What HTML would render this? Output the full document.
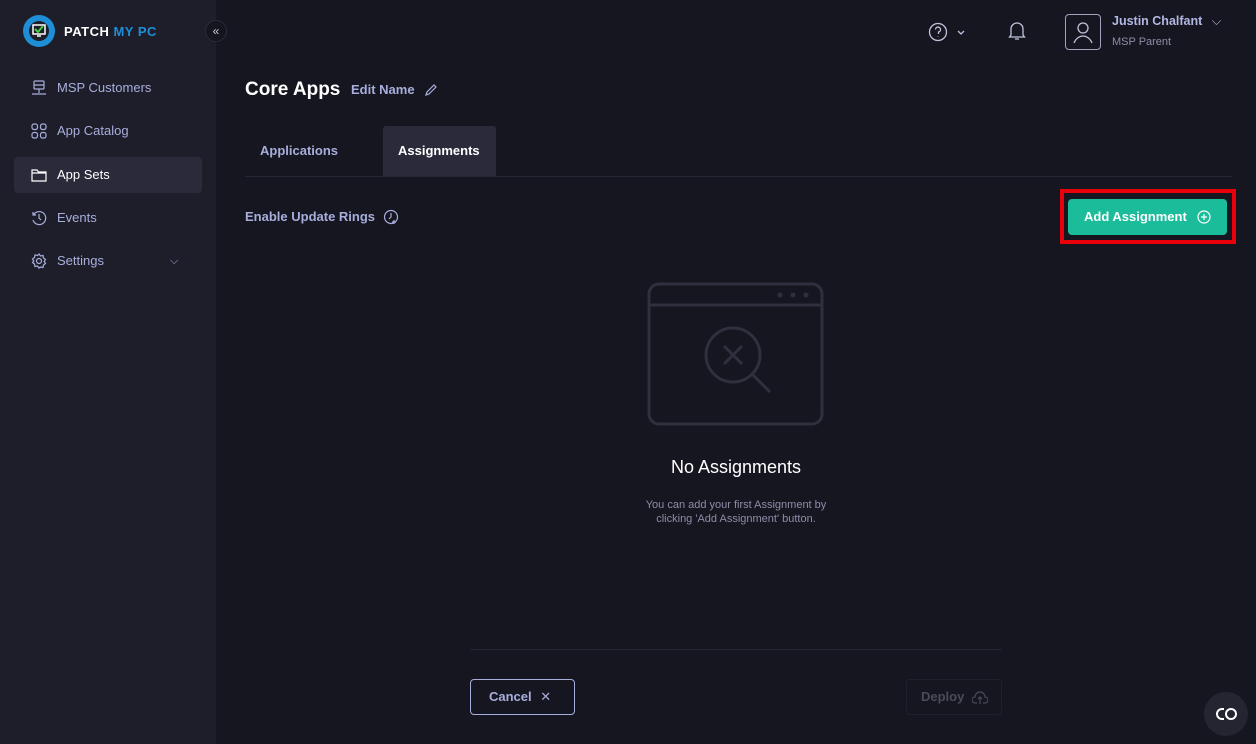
<!DOCTYPE html>
<html><head><meta charset="utf-8"><style>
*{margin:0;padding:0;box-sizing:border-box}
body{width:1256px;height:744px;background:#161620;font-family:"Liberation Sans",sans-serif;position:relative;overflow:hidden;color:#a8aedb}
.side{position:absolute;left:0;top:0;width:216px;height:744px;background:#1e1e2b}
.logo{position:absolute;left:22px;top:14px}
.brand{position:absolute;left:64px;top:24px;font-weight:bold;font-size:13px;color:#fff;letter-spacing:0.5px}
.brand span{color:#1e8fd6}
.coll{position:absolute;left:205px;top:20px;width:22px;height:22px;border-radius:50%;background:#151520;border:1px solid #2a2a38;color:#ccc;font-size:12px;text-align:center;line-height:20px}
.nav{position:absolute;left:14px;width:188px;height:36px;border-radius:4px;font-size:13px;line-height:36px;padding-left:43px;color:#a8aedb}
.nav svg{position:absolute;left:17px;top:10px}
.nav.act{background:#2a2a3a;color:#fff}
.t{position:absolute}
</style></head><body>
<div class="side">
<svg class="logo" width="34" height="34" viewBox="0 0 34 34"><circle cx="17" cy="17" r="16" fill="#1e8fd6"/><circle cx="17" cy="17" r="10" fill="#1e1e2b"/><path d="M11 11h12v9H11z" fill="none" stroke="#fff" stroke-width="1.5"/><path d="M13 15l3 3 5-6" stroke="#4c4" stroke-width="2" fill="none"/><path d="M15 22h4" stroke="#fff" stroke-width="1.5"/></svg>
<div class="brand">PATCH <span>MY PC</span></div>
<div class="coll">«</div>
<div class="nav" style="top:70px"><svg width="16" height="16" viewBox="0 0 16 16" fill="none" stroke="#a8aedb" stroke-width="1.2"><rect x="3" y="1" width="10" height="8" rx="1"/><path d="M8 9v4M1 14h14M3 5h10"/></svg>MSP Customers</div>
<div class="nav" style="top:113px"><svg width="16" height="16" viewBox="0 0 16 16" fill="none" stroke="#a8aedb" stroke-width="1.2"><rect x="1" y="1" width="5.5" height="5.5" rx="2"/><rect x="9.5" y="1" width="5.5" height="5.5" rx="2"/><rect x="1" y="9.5" width="5.5" height="5.5" rx="2"/><rect x="9.5" y="9.5" width="5.5" height="5.5" rx="2"/></svg>App Catalog</div>
<div class="nav act" style="top:157px"><svg width="16" height="16" viewBox="0 0 16 16" fill="none" stroke="#fff" stroke-width="1.2"><path d="M1 3h5l1.5 2H15v9H1z M1 6h14"/></svg>App Sets</div>
<div class="nav" style="top:200px"><svg width="16" height="16" viewBox="0 0 16 16" fill="none" stroke="#a8aedb" stroke-width="1.2"><path d="M2.5 5A6.5 6.5 0 1 1 2 10M2 2v3h3M8 4v4l2 2"/></svg>Events</div>
<div class="nav" style="top:243px"><svg width="16" height="16" viewBox="0 0 16 16" fill="none" stroke="#a8aedb" stroke-width="1.2"><circle cx="8" cy="8" r="2.5"/><path d="M8 1l1.5 2 2.5-.5.5 2.5 2 1.5-1.3 2 1.3 2-2 1.5-.5 2.5-2.5-.5L8 15l-1.5-2-2.5.5-.5-2.5-2-1.5L2.8 8 1.5 6 3.5 4.5 4 2l2.5.5z"/></svg>Settings<span style="position:absolute;left:156px;font-size:11px">⌵</span></div>
</div>

<svg class="t" style="left:928px;top:22px" width="40" height="20" fill="none" stroke="#c0c3dd" stroke-width="1.3"><circle cx="10" cy="10" r="8.5"/><path d="M7.5 7.5a2.5 2.5 0 1 1 3 2.5v2M10 14.5v.5"/><path d="M30 9l3 3 3-3"/></svg>
<svg class="t" style="left:1007px;top:20px" width="20" height="22" fill="none" stroke="#c0c3dd" stroke-width="1.3"><path d="M4 15V9a6 6 0 0 1 12 0v6l1.5 2h-15zM8 19h4"/></svg>
<div class="t" style="left:1065px;top:14px;width:36px;height:36px;border:1px solid #a0a4c0;border-radius:4px"><svg width="34" height="34" fill="none" stroke="#c0c3dd" stroke-width="1.3"><circle cx="17" cy="13" r="5"/><path d="M8 28c2-5 6-7 9-7s7 2 9 7"/></svg></div>
<div class="t" style="left:1112px;top:14px;font-size:12.5px;font-weight:bold;color:#b3b7e4">Justin Chalfant <span style="margin-left:6px;font-weight:normal">⌵</span></div>
<div class="t" style="left:1112px;top:36px;font-size:11px;color:#8a8ea8">MSP Parent</div>

<div class="t" style="left:245px;top:79px;font-size:19px;font-weight:bold;color:#fff">Core Apps</div>
<div class="t" style="left:351px;top:82px;font-size:13px;font-weight:bold;color:#a8aedb">Edit Name</div>
<svg class="t" style="left:424px;top:83px" width="14" height="14" fill="none" stroke="#a8aedb" stroke-width="1.2"><path d="M2 12l1-3 7-7 2 2-7 7z"/></svg>

<div class="t" style="left:383px;top:126px;width:113px;height:50px;background:#2a2a3a;border-radius:3px 3px 0 0"></div>
<div class="t" style="left:260px;top:143px;font-size:13px;font-weight:bold;color:#a8aedb">Applications</div>
<div class="t" style="left:398px;top:143px;font-size:13px;font-weight:bold;color:#fff">Assignments</div>
<div class="t" style="left:245px;top:176px;width:987px;height:1px;background:#262633"></div>

<div class="t" style="left:245px;top:209px;font-size:13px;font-weight:bold;color:#a8aedb">Enable Update Rings</div>
<svg class="t" style="left:383px;top:209px" width="16" height="16" fill="none" stroke="#a8aedb" stroke-width="1.2"><circle cx="8" cy="8" r="6.5"/><path d="M8 4v4l-2 2M11 11v4M9 13h4"/></svg>

<div class="t" style="left:1060px;top:189px;width:176px;height:55px;border:4px solid #e8000b"></div>
<div class="t" style="left:1068px;top:199px;width:159px;height:36px;background:#1abc9a;border-radius:4px;color:#fff;font-size:13px;font-weight:bold;line-height:36px;padding-left:16px">Add Assignment<svg style="position:absolute;left:129px;top:11px" width="14" height="14" fill="none" stroke="#fff" stroke-width="1.2"><circle cx="7" cy="7" r="6"/><path d="M7 4v6M4 7h6"/></svg></div>

<svg class="t" style="left:646px;top:281px" width="180" height="146" fill="none" stroke="#2f2f3d" stroke-width="3"><rect x="3" y="3" width="173" height="140" rx="10"/><path d="M3 24h173"/><circle cx="134" cy="14" r="2.5" fill="#2f2f3d" stroke="none"/><circle cx="147" cy="14" r="2.5" fill="#2f2f3d" stroke="none"/><circle cx="160" cy="14" r="2.5" fill="#2f2f3d" stroke="none"/><circle cx="87" cy="74" r="27"/><path d="M78 65l18 18M96 65l-18 18M107 94l17 17"/></svg>
<div class="t" style="left:600px;top:457px;width:272px;text-align:center;font-size:18px;color:#fff">No Assignments</div>
<div class="t" style="left:600px;top:498px;width:272px;text-align:center;font-size:11px;line-height:14px;color:#8a8ea8">You can add your first Assignment by<br>clicking 'Add Assignment' button.</div>

<div class="t" style="left:470px;top:649px;width:532px;height:1px;background:#262633"></div>
<div class="t" style="left:470px;top:679px;width:105px;height:36px;border:1px solid #a8aedb;border-radius:4px;font-size:13px;font-weight:bold;line-height:34px;padding-left:18px;color:#a8aedb">Cancel <span style="font-weight:normal;margin-left:5px">✕</span></div>
<div class="t" style="left:906px;top:679px;width:96px;height:36px;border:1px solid #20202c;border-radius:4px;font-size:13px;font-weight:bold;line-height:34px;padding-left:14px;color:#4a4a58">Deploy</div>
<svg class="t" style="left:972px;top:688px" width="16" height="18" fill="none" stroke="#4a4a58" stroke-width="1.2"><path d="M5 15H3a3 3 0 0 1 0-6 5 5 0 0 1 10 0 3 3 0 0 1 0 6h-2M8 16V9M6 11l2-2 2 2"/></svg>
<div class="t" style="left:1204px;top:692px;width:44px;height:44px;border-radius:50%;background:#252532"><svg style="position:absolute;left:12px;top:15px" width="22" height="14" fill="none" stroke="#fff" stroke-width="2"><path d="M8 2H6a5 5 0 0 0 0 10h2"/><circle cx="15" cy="7" r="5"/></svg></div>
</body></html>
